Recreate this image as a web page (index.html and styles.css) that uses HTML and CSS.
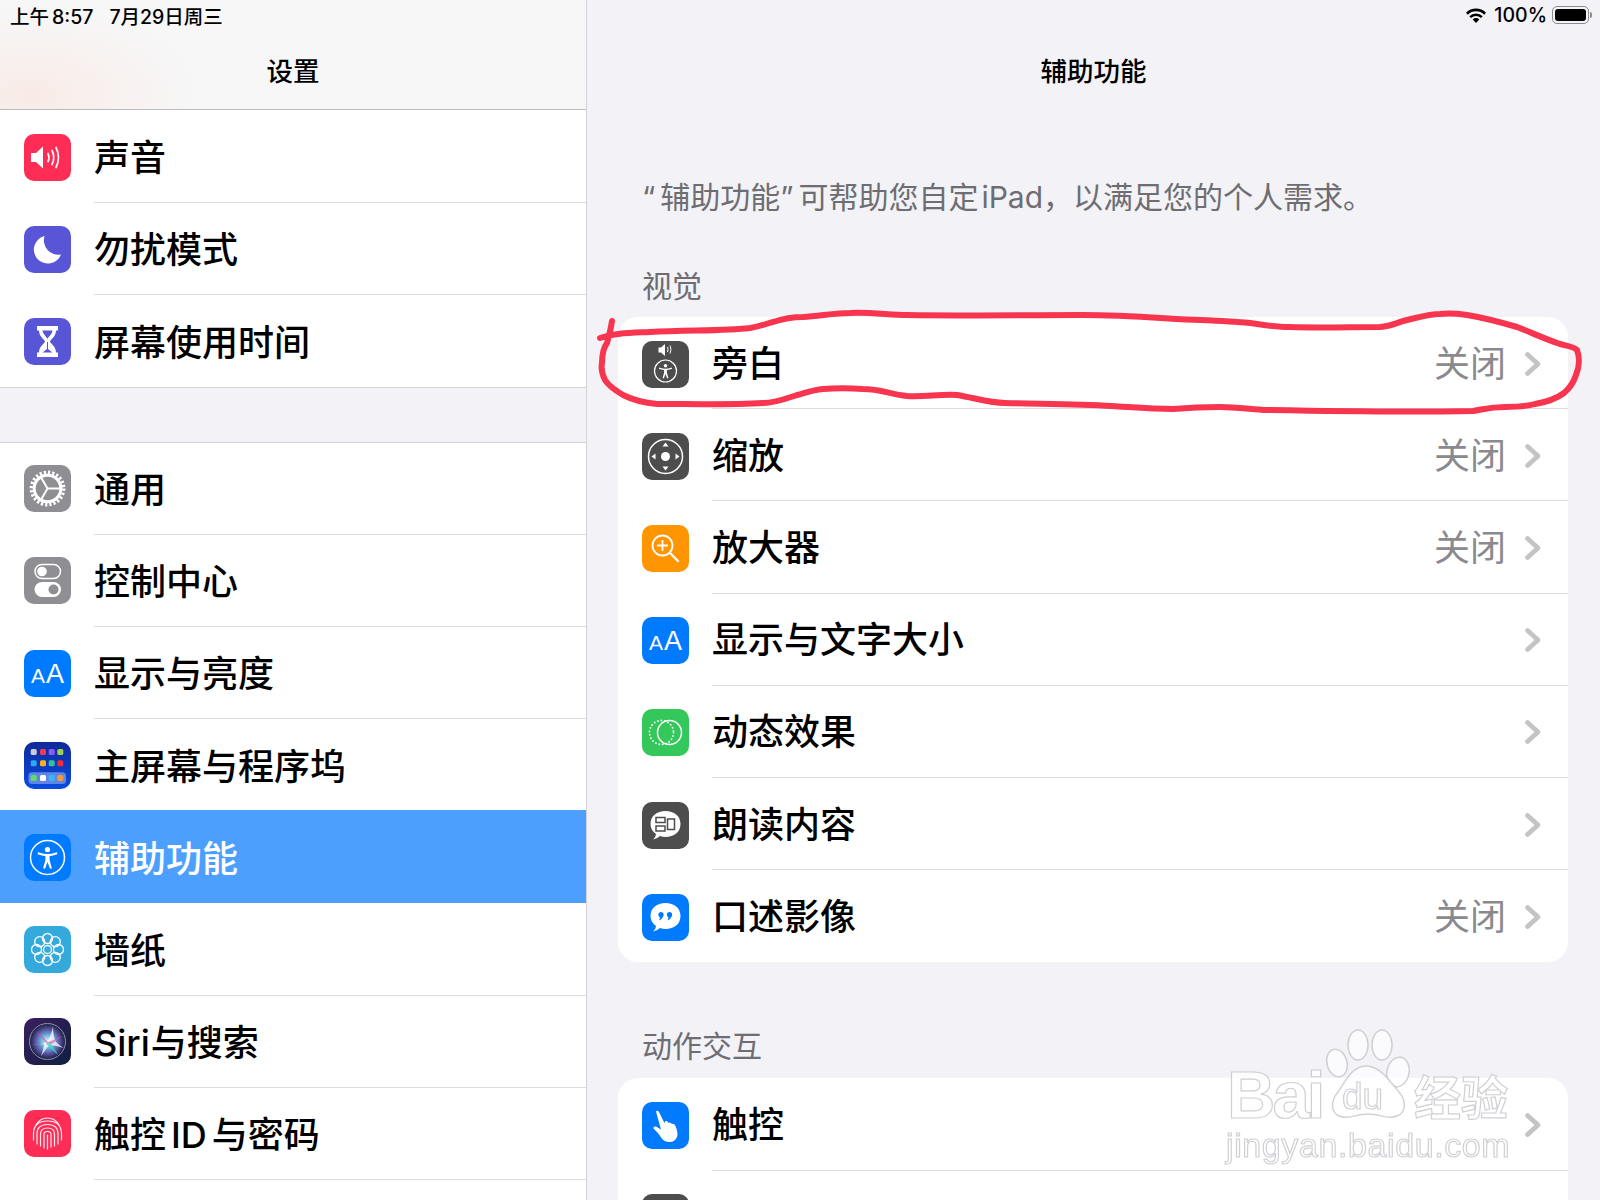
FILE: index.html
```html
<!DOCTYPE html>
<html lang="zh-CN">
<head>
<meta charset="utf-8">
<title>辅助功能</title>
<link rel="stylesheet" href="styles.css">
</head>
<body>
<svg class="defs" width="0" height="0">
  <symbol id="person" viewBox="0 0 24 24">
    <circle cx="12" cy="5.600" r="2.100" fill="currentColor"/>
    <path d="M5 8.800 Q12 11.400 19 8.800" fill="none" stroke="currentColor" stroke-width="1.800" stroke-linecap="round"/>
    <path d="M10.300 10.300 H13.700 V14 L15.500 20.500 L14 20.900 L12 15.500 L10 20.900 L8.500 20.500 L10.300 14z" fill="currentColor"/>
  </symbol>
  <symbol id="chev" viewBox="0 0 18 26">
    <path d="M3.500 3.500 L14 13 L3.500 22.500" fill="none" stroke="currentColor" stroke-width="4.800" stroke-linecap="round" stroke-linejoin="round"/>
  </symbol>
</svg>
<div class="app">
  <aside class="side">
    <header class="head head-side">
      <div class="status"><span>上午<span class="sp-s"></span>8:57</span><span>7月29日周三</span></div>
      <h1 class="title">设置</h1>
    </header>
    <section class="list">
      <div class="row">
        <svg class="ico" viewBox="0 0 47 47"><rect width="47" height="47" rx="10" fill="#ff2d55"/><path d="M7 19h5l7-6.500v22L12 28H7z" fill="#fff"/><path d="M24 19.500q2 4 0 8M28 16.500q3.500 7 0 14M32 13.500q5 10 0 20" fill="none" stroke="#fff" stroke-width="1.700" stroke-linecap="round"/></svg>
        <div class="body"><span class="label">声音</span></div>
      </div>
      <div class="row">
        <svg class="ico" viewBox="0 0 47 47"><rect width="47" height="47" rx="10" fill="#5856d6"/><path d="M20.500 10A14 14 0 1 0 37 28.500A14.500 14.500 0 0 1 20.500 10z" fill="#fff"/></svg>
        <div class="body"><span class="label">勿扰模式</span></div>
      </div>
      <div class="row row-last">
        <svg class="ico" viewBox="0 0 47 47"><rect width="47" height="47" rx="10" fill="#5856d6"/><path d="M13 8h21v4.500h-2c0 6-5 8.500-6 11 1 2.500 6 5 6 11h2V39H13v-4.500h2c0-6 5-8.500 6-11-1-2.500-6-5-6-11h-2z" fill="#fff"/><path d="M18.500 12.500h10c-.5 4-4 6-5 8.500-1-2.500-4.500-4.500-5-8.500zM23 24v7l-4.500 3.500h10L24 31v-7z" fill="#5856d6"/></svg>
        <div class="body"><span class="label">屏幕使用时间</span></div>
      </div>
    </section>
    <div class="gap"></div>
    <section class="list">
      <div class="row">
        <svg class="ico" viewBox="0 0 47 47"><rect width="47" height="47" rx="10" fill="#8e8e93"/><circle cx="23.500" cy="23.500" r="16.200" fill="none" stroke="#fff" stroke-width="3.400" stroke-dasharray="2.300 1.940"/><circle cx="23.500" cy="23.500" r="13.300" fill="none" stroke="#fff" stroke-width="3"/><path d="M23.500 23.500L37 23.500M23.500 23.500L16.700 11.800M23.500 23.500L16.700 35.200" stroke="#fff" stroke-width="2" fill="none"/></svg>
        <div class="body"><span class="label">通用</span></div>
      </div>
      <div class="row">
        <svg class="ico" viewBox="0 0 47 47"><rect width="47" height="47" rx="10" fill="#8e8e93"/><rect x="11" y="7.500" width="25.500" height="14" rx="7" fill="none" stroke="#fff" stroke-width="1.500"/><circle cx="18" cy="14.500" r="4.800" fill="#fff"/><rect x="10.500" y="25" width="26.500" height="15" rx="7.500" fill="#fff"/><circle cx="29.500" cy="32.500" r="5" fill="#8e8e93"/></svg>
        <div class="body"><span class="label">控制中心</span></div>
      </div>
      <div class="row">
        <span class="ico ico-aa"><span class="aa-s">A</span><span class="aa-l">A</span></span>
        <div class="body"><span class="label">显示与亮度</span></div>
      </div>
      <div class="row">
        <svg class="ico" viewBox="0 0 47 47">
          <defs><linearGradient id="hs" x1="0" y1="0" x2="0" y2="1"><stop offset="0" stop-color="#10299a"/><stop offset="1" stop-color="#0a4be0"/></linearGradient></defs>
          <rect width="47" height="47" rx="10" fill="url(#hs)"/>
          <rect x="6.700" y="7" width="6" height="6" rx="1.500" fill="#c9cdd6"/><rect x="16" y="7" width="6" height="6" rx="1.500" fill="#ef3a55"/><rect x="24.700" y="7" width="6" height="6" rx="1.500" fill="#8f5bf0"/><rect x="33.300" y="7" width="6" height="6" rx="1.500" fill="#9ed24c"/>
          <rect x="6.700" y="18.300" width="6" height="6" rx="1.500" fill="#2aa8f5"/><rect x="16" y="18.300" width="6" height="6" rx="1.500" fill="#f6b21a"/><rect x="24.700" y="18.300" width="6" height="6" rx="1.500" fill="#2ec6a0"/><rect x="33.300" y="18.300" width="6" height="6" rx="1.500" fill="#ee2c3c"/>
          <rect x="4.500" y="30.300" width="37.500" height="11.700" rx="3.500" fill="#5f86e6"/>
          <rect x="6.700" y="33" width="6" height="6" rx="1.500" fill="#5fdc6c"/><rect x="16" y="33" width="6" height="6" rx="1.500" fill="#fff"/><rect x="24.700" y="33" width="6" height="6" rx="1.500" fill="#35b8f5"/><rect x="33.300" y="33" width="6" height="6" rx="1.500" fill="#f59a3a"/>
        </svg>
        <div class="body body-none"><span class="label">主屏幕与程序坞</span></div>
      </div>
      <div class="row row-on">
        <svg class="ico ico-access" viewBox="0 0 47 47"><rect width="47" height="47" rx="10" fill="#007aff"/><circle cx="23.500" cy="23.500" r="17" fill="none" stroke="#fff" stroke-width="1.500"/><use href="#person" x="8.500" y="8.500" width="30" height="30"/></svg>
        <div class="body body-none"><span class="label">辅助功能</span></div>
      </div>
      <div class="row">
        <svg class="ico" viewBox="0 0 47 47"><rect width="47" height="47" rx="10" fill="#34aadc"/><g fill="none" stroke="#fff" stroke-width="1.300"><circle cx="23.500" cy="23.500" r="4"/><circle cx="23.500" cy="12.500" r="5"/><circle cx="23.500" cy="34.500" r="5"/><circle cx="12.500" cy="23.500" r="5"/><circle cx="34.500" cy="23.500" r="5"/><circle cx="15.700" cy="15.700" r="5"/><circle cx="31.300" cy="15.700" r="5"/><circle cx="15.700" cy="31.300" r="5"/><circle cx="31.300" cy="31.300" r="5"/></g></svg>
        <div class="body"><span class="label">墙纸</span></div>
      </div>
      <div class="row">
        <svg class="ico" viewBox="0 0 47 47">
          <defs>
            <linearGradient id="sbg" x1="0" y1="0" x2="1" y2="1"><stop offset="0" stop-color="#3a1f5e"/><stop offset="1" stop-color="#0f1f42"/></linearGradient>
            <radialGradient id="sorb"><stop offset="0" stop-color="#e8f4ff"/><stop offset=".35" stop-color="#6fb4dc"/><stop offset=".7" stop-color="#544f9c"/><stop offset="1" stop-color="#1a1c3c"/></radialGradient>
          </defs>
          <rect width="47" height="47" rx="10" fill="url(#sbg)"/>
          <circle cx="23.500" cy="23.500" r="18" fill="url(#sorb)" stroke="#8f93a8" stroke-width="1"/>
          <path d="M8 27Q20 26 23.500 23.500Q28 15 29 8Q29 18 32 24Q36 28 40 30Q30 27 25 27Q20 34 17 38Q20 30 20 26Q14 26 8 27z" fill="#fff" opacity=".75"/>
          <path d="M12 14Q20 20 24 24Q30 22 38 18Q30 25 26 27Q22 26 12 14z" fill="#e04aa8" opacity=".6"/>
          <path d="M25 24Q32 32 34 37Q28 32 22 26z" fill="#38e0c0" opacity=".7"/>
        </svg>
        <div class="body"><span class="label">Siri<span class="sp-n"></span>与搜索</span></div>
      </div>
      <div class="row">
        <svg class="ico" viewBox="0 0 47 47"><rect width="47" height="47" rx="10" fill="#ff2d55"/><g fill="none" stroke="#fff" stroke-width="1.200" stroke-linecap="round" opacity=".9"><path d="M12 15Q16 8 23.500 8Q31 8 35 15"/><path d="M9.500 30V24Q9.500 11 23.500 11Q37.500 11 37.500 24V30"/><path d="M13 34V24Q13 14.500 23.500 14.500Q34 14.500 34 24V34"/><path d="M16.500 36V24Q16.500 18 23.500 18Q30.500 18 30.500 24V36"/><path d="M20 38V24Q20 21.500 23.500 21.500Q27 21.500 27 24V37"/><path d="M23.500 25V39"/></g></svg>
        <div class="body"><span class="label">触控<span class="sp"></span>ID<span class="sp"></span>与密码</span></div>
      </div>
      <div class="row"><div class="ico ico-blank"></div><div class="body"></div></div>
    </section>
  </aside>
  <main class="main">
    <header class="head head-main">
      <div class="status status-right">
        <svg class="wifi" viewBox="0 0 22 16"><path d="M1 5.800A14 14 0 0 1 21 5.800L19.200 7.700A11.500 11.500 0 0 0 2.800 7.700z M4.300 9.200A9.400 9.400 0 0 1 17.700 9.200L15.900 11A6.900 6.900 0 0 0 6.100 11z M7.700 12.500A4.600 4.600 0 0 1 14.300 12.500L11 16z" fill="#000"/></svg>
        <span>100%</span>
        <span class="batt"><span class="batt-fill"></span></span><span class="batt-nub"></span>
      </div>
      <h1 class="title">辅助功能</h1>
    </header>
    <p class="desc"><span class="q">“</span>辅助功能<span class="q">”</span>可帮助您自定<span class="sp-s"></span>iPad&#xFF0C;以满足您的个人需求。</p>
    <h2 class="sec sec-first">视觉</h2>
    <section class="card">
      <div class="row">
        <svg class="ico ico-white" viewBox="0 0 47 47"><rect width="47" height="47" rx="10" fill="#4d4d4d"/><path d="M16.500 5.500h2.500l4-3.500v12l-4-3.500h-2.500z" fill="#fff" transform="translate(0 1)"/><path d="M25.500 6q1.200 2.500 0 5M28 4.500q2 4 0 8" fill="none" stroke="#fff" stroke-width="1"/><circle cx="23.500" cy="30" r="11" fill="none" stroke="#fff" stroke-width="1.200"/><use href="#person" x="13.500" y="20" width="20" height="20"/></svg>
        <div class="body"><span class="label">旁白</span><span class="val">关闭</span><svg class="chev"><use href="#chev"/></svg></div>
      </div>
      <div class="row">
        <svg class="ico" viewBox="0 0 47 47"><rect width="47" height="47" rx="10" fill="#4d4d4d"/><circle cx="23.500" cy="23.500" r="17" fill="none" stroke="#fff" stroke-width="1.500"/><circle cx="23.500" cy="23.500" r="4.500" fill="#fff"/><path d="M23.500 9.500l3 4h-6zM23.500 37.500l3-4h-6zM9.500 23.500l4-3v6zM37.500 23.500l-4-3v6z" fill="#fff"/></svg>
        <div class="body"><span class="label">缩放</span><span class="val">关闭</span><svg class="chev"><use href="#chev"/></svg></div>
      </div>
      <div class="row">
        <svg class="ico" viewBox="0 0 47 47"><rect width="47" height="47" rx="10" fill="#ff9500"/><circle cx="20.500" cy="20.500" r="10" fill="none" stroke="#fff" stroke-width="1.800"/><path d="M20.500 15v11M15 20.500h11" stroke="#fff" stroke-width="1.800"/><path d="M28 28L36 36" stroke="#fff" stroke-width="2.400" stroke-linecap="round"/></svg>
        <div class="body"><span class="label">放大器</span><span class="val">关闭</span><svg class="chev"><use href="#chev"/></svg></div>
      </div>
      <div class="row">
        <span class="ico ico-aa"><span class="aa-s">A</span><span class="aa-l">A</span></span>
        <div class="body"><span class="label">显示与文字大小</span><svg class="chev"><use href="#chev"/></svg></div>
      </div>
      <div class="row">
        <svg class="ico" viewBox="0 0 47 47"><rect width="47" height="47" rx="10" fill="#34c759"/><circle cx="27.500" cy="23.500" r="12" fill="none" stroke="#fff" stroke-width="1.500"/><circle cx="19.500" cy="23.500" r="12" fill="none" stroke="#fff" stroke-width="1.800" stroke-dasharray=".1 3.400" stroke-linecap="round"/></svg>
        <div class="body"><span class="label">动态效果</span><svg class="chev"><use href="#chev"/></svg></div>
      </div>
      <div class="row">
        <svg class="ico" viewBox="0 0 47 47"><rect width="47" height="47" rx="10" fill="#4d4d4d"/><path d="M23.500 9C32 9 38.500 14 38.500 22C38.500 30 32 35 23.500 35Q20.500 35 18 34Q15 37 11 37.500Q14 35 14 32Q8.500 28 8.500 22C8.500 14 15 9 23.500 9z" fill="#fff"/><g fill="none" stroke="#4d4d4d" stroke-width="1.500"><rect x="14" y="15.500" width="9" height="5"/><rect x="14" y="24" width="9" height="5"/><rect x="25.500" y="17" width="7" height="10.500"/></g></svg>
        <div class="body"><span class="label">朗读内容</span><svg class="chev"><use href="#chev"/></svg></div>
      </div>
      <div class="row row-last">
        <svg class="ico" viewBox="0 0 47 47"><rect width="47" height="47" rx="10" fill="#007aff"/><path d="M23.500 9C32 9 38.500 14 38.500 22C38.500 30 32 35 23.500 35Q20.500 35 18 34Q15 37 11 37.500Q14 35 14 32Q8.500 28 8.500 22C8.500 14 15 9 23.500 9z" fill="#fff"/><g fill="#007aff"><circle cx="19" cy="20.500" r="2.600"/><circle cx="27.500" cy="20.500" r="2.600"/><path d="M21.400 20.800Q21 25 17 26.500Q18.500 24 17.500 22.500zM29.900 20.800Q29.500 25 25.500 26.500Q27 24 26 22.500z"/></g></svg>
        <div class="body"><span class="label">口述影像</span><span class="val">关闭</span><svg class="chev"><use href="#chev"/></svg></div>
      </div>
    </section>
    <h2 class="sec sec-second">动作交互</h2>
    <section class="card">
      <div class="row">
        <svg class="ico" viewBox="0 0 47 47"><rect width="47" height="47" rx="10" fill="#007aff"/><path d="M14 9.500Q15.500 8 17 10L22.500 21L23.500 19Q25.500 18.500 26.500 21Q28 19.500 30 22Q32 21 33.500 24Q36.500 31 35 35Q33 40 27.500 40Q22 40 19.500 36Q16.500 31 11.500 26.500Q11 24 14 24.500L19 27.500z" fill="#fff"/></svg>
        <div class="body"><span class="label">触控</span><svg class="chev"><use href="#chev"/></svg></div>
      </div>
      <div class="row">
        <svg class="ico" viewBox="0 0 47 47"><rect width="47" height="47" rx="10" fill="#4d4d4d"/></svg>
        <div class="body"></div>
      </div>
    </section>
  </main>
</div>
<svg class="ink" viewBox="0 0 1600 1200" width="1600" height="1200">
  <path d="M600 338 C615 333 630 333 650 332 C690 330 725 331 750 328 C762 326 768 323 773 322 C785 318 795 317 803 317 C820 316 835 313 850 313 C870 312 890 315 907 315 C960 316 1030 315 1083 315 C1130 315 1170 319 1200 320 C1225 321 1240 322 1250 323 C1265 325 1275 327 1290 327 C1320 328 1350 327 1380 327 C1392 326 1398 322 1407 320 C1420 317 1430 314 1440 314 C1450 313 1460 314 1467 315 C1485 318 1500 322 1517 327 C1530 332 1545 339 1560 344 C1568 346 1575 347 1577 350 C1580 358 1579 368 1576 375 C1573 384 1570 388 1564 393 C1556 399 1547 402 1535 404 C1525 407 1515 407 1505 407 C1490 407 1485 409 1473 411 C1420 412 1320 411 1267 410 C1250 409 1235 407 1220 407 C1200 407 1185 408 1173 409 C1150 409 1130 407 1112 406 C1075 404 1040 404 1005 403 C990 403 975 398 957 395 C940 394 925 397 907 396 C890 394 880 389 863 389 C850 388 835 388 823 389 C812 390 805 393 797 395 C785 399 775 403 763 403 C730 405 690 404 657 404 C645 403 633 400 623 395 C613 389 608 385 605 380 C601 372 601 368 602 363 C602 353 604 347 607 343 C609 336 611 328 612 321" fill="none" stroke="#f7354f" stroke-width="6" stroke-linecap="round" stroke-linejoin="round"/>
</svg>
<div class="mark">
  <svg class="mk mk-paw" viewBox="0 0 300 160"><g fill="#fff" fill-opacity=".7" stroke="#aeaeb4" stroke-opacity=".55" stroke-width="1.500"><ellipse cx="138" cy="25" rx="10" ry="15"/><ellipse cx="162" cy="25" rx="10" ry="15"/><ellipse cx="117" cy="43" rx="10" ry="14" transform="rotate(-15 117 43)"/><ellipse cx="178" cy="52" rx="11" ry="15" transform="rotate(12 178 52)"/><path d="M146 46C132 46 125 62 118 72C111 80 110 92 119 96C129 100 136 94 148 94C160 94 168 100 177 96C187 92 186 80 179 72C171 62 160 46 146 46z"/></g></svg>
  <span class="mk mk-bai">Bai</span>
  <span class="mk mk-du">du</span>
  <span class="mk mk-cn">经验</span>
  <span class="mk mk-url">jingyan.baidu.com</span>
</div>
</body>
</html>
```
FILE: styles.css
```css
* { box-sizing: border-box; }
html, body { margin: 0; padding: 0; }
body {
  width: 1600px;
  height: 1200px;
  overflow: hidden;
  position: relative;
  background: #f2f2f7;
  color: #000;
  font-family: Inter, "Noto Sans CJK SC", "Noto Sans", sans-serif;
}
.defs { position: absolute; }
.app { display: flex; width: 1600px; height: 1200px; }
.side {
  width: 587px;
  flex: none;
  background: #f2f2f7;
  border-right: 1px solid #d2d2d7;
  overflow: hidden;
}
.main { flex: 1; overflow: hidden; }

.head { height: 110px; position: relative; }
.head-side {
  background:
    radial-gradient(170px 90px at 30px 95px, rgba(250, 225, 215, .55), rgba(250, 235, 230, 0)),
    #f7f7f8;
  border-bottom: 1px solid #bcbcc0;
}
.status {
  height: 30px;
  display: flex;
  align-items: center;
  padding: 0 0 0 10px;
  gap: 16px;
  font-size: 19.5px;
  font-weight: 500;
}
.status-right { justify-content: flex-end; padding: 0 8px 0 0; gap: 0; }
.sp-s { display: inline-block; width: 3px; }
.sp-n { display: inline-block; width: 1px; }
.wifi { width: 22px; height: 16px; margin-right: 7px; }
.batt {
  width: 37px;
  height: 18px;
  margin-left: 5px;
  border: 1px solid #8b8b8e;
  border-radius: 5px;
  padding: 2px;
  display: flex;
}
.batt-fill { flex: 1; background: #000; border-radius: 3px; }
.batt-nub { width: 2px; height: 6px; background: #8b8b8e; border-radius: 0 2px 2px 0; margin-left: 1px; }
.title {
  margin: 21px 0 0;
  font-size: 26.5px;
  line-height: 40px;
  font-weight: 500;
  text-align: center;
}

.list { background: #fff; }
.gap {
  height: 56px;
  margin-bottom: -1px;
  border-top: 1px solid #d2d2d7;
  border-bottom: 1px solid #d2d2d7;
  background: #f2f2f7;
  position: relative;
}
.row {
  height: 92.2px;
  display: flex;
  align-items: center;
  padding: 2px 0 0 24px;
}
.ico { width: 47px; height: 47px; flex: none; display: block; }
.ico-access, .ico-white { color: #fff; }
.ico-blank { visibility: hidden; }
.body {
  flex: 1;
  align-self: stretch;
  min-width: 0;
  margin-left: 23px;
  padding-right: 26px;
  display: flex;
  align-items: center;
  border-bottom: 1px solid #dcdce0;
}
.side .body { margin-bottom: -1px; }
.row-last .body, .body-none { border-bottom: 0; }
.label { flex: 1; font-size: 36px; line-height: 44px; font-weight: 500; white-space: nowrap; }
.side .label { padding-top: 2px; }
.sp { display: inline-block; width: 5px; }
.val { font-size: 36px; line-height: 44px; color: #8a8a8e; margin-right: 18px; }
.chev { width: 18px; height: 26px; color: #c4c4c7; flex: none; }
.row-on { background: #4d9ffe; color: #fff; }

.ico-aa {
  background: #007aff;
  border-radius: 10px;
  color: #fff;
  display: flex;
  align-items: baseline;
  justify-content: center;
  padding-top: 8px;
  font-family: "Liberation Sans", sans-serif;
  line-height: 32px;
}
.aa-s { font-size: 21px; }
.aa-l { font-size: 27px; margin-left: 1px; }

.desc {
  margin: 67px 0 0 55px;
  font-size: 30px;
  line-height: 40px;
  color: #6d6d72;
  white-space: nowrap;
}
.q { letter-spacing: 5px; }
.sec {
  margin: 0 0 0 55px;
  font-size: 30px;
  line-height: 40px;
  font-weight: 400;
  color: #6d6d72;
}
.sec-first { margin-top: 49px; }
.sec-second { margin-top: 64px; }
.card {
  margin: 11px 32px 0 31px;
  background: #fff;
  border-radius: 20px;
}
.sec-second + .card { margin-top: 12px; border-radius: 20px 20px 0 0; }

.ink { position: absolute; left: 0; top: 0; pointer-events: none; }

.mark { position: absolute; left: 1220px; top: 1020px; width: 300px; height: 160px; pointer-events: none; filter: blur(.4px); }
.mk { position: absolute; color: rgba(255, 255, 255, .75); -webkit-text-stroke: 1.2px rgba(170, 170, 176, .55); font-family: "Liberation Sans", sans-serif; white-space: nowrap; }
.mk-paw { left: 0; top: 0; width: 300px; height: 160px; }
.mk-bai { left: 7px; top: 37px; font-size: 67px; line-height: 76px; font-weight: 700; letter-spacing: -3px; }
.mk-du { left: 122px; top: 55px; font-size: 37px; line-height: 44px; }
.mk-cn { left: 194px; top: 45px; font-size: 47px; line-height: 60px; font-family: "Noto Sans CJK SC", sans-serif; font-weight: 700; }
.mk-url { left: 6px; top: 105px; font-size: 34px; line-height: 40px; letter-spacing: .6px; }
```
